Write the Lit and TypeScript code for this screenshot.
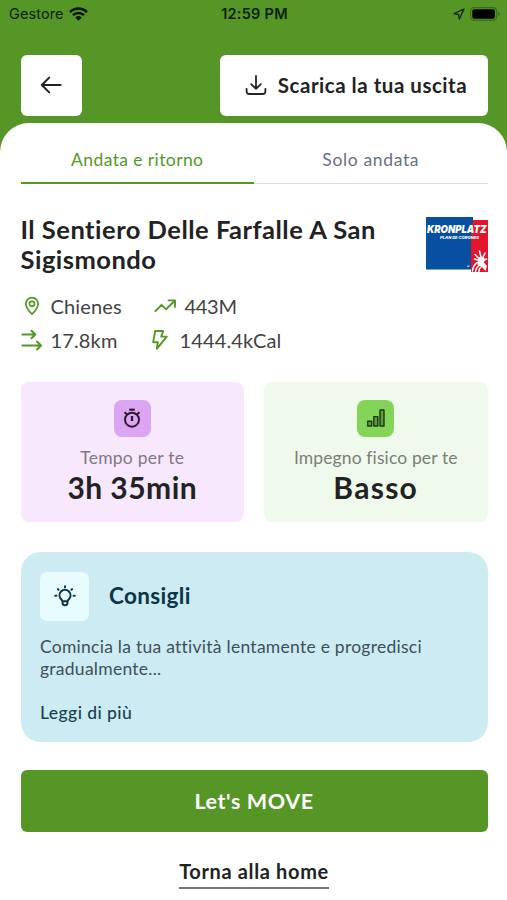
import { LitElement, html, css, svg } from "lit";
import { customElement } from "lit/decorators.js";

const arrowLeft = svg`<svg width="24" height="24" viewBox="0 0 24 24" fill="none" stroke="#222" stroke-width="2" stroke-linecap="round" stroke-linejoin="round"><path d="M21.600 12H3M10.200 4.600 2.800 12l7.400 7.400"/></svg>`;
const download = svg`<svg width="22" height="22" viewBox="0 0 22 22" fill="none" stroke="#222" stroke-width="1.800" stroke-linecap="round" stroke-linejoin="round"><path d="M11 2v12.500M6.200 10.200 11 14.800l4.800-4.600M1.600 14.800v2.400q0 2.800 2.800 2.800h13.200q2.800 0 2.800-2.800v-2.400"/></svg>`;
const wifi = svg`<svg width="19" height="14" viewBox="0 0 19 14" fill="none" stroke="#0a1404" stroke-width="2.500"><path d="M1 5.100C5.800.4 13.200.4 18 5.100M4 8.200C7 5.300 12 5.300 15 8.200"/><path d="M6.300 10.400Q9.500 7.700 12.700 10.400L9.500 13.700Z" fill="#0a1404" stroke="none"/></svg>`;
const locate = svg`<svg width="12" height="12" viewBox="0 0 12 12" fill="none" stroke="#14260a" stroke-width="1.300" stroke-linejoin="round"><path d="M11 1 1 5.600l4.500.9.900 4.500Z"/></svg>`;
const battery = svg`<svg width="30" height="14" viewBox="0 0 30 14"><rect x=".6" y=".6" width="26" height="12.800" rx="3.600" fill="none" stroke="#3b6b1b" stroke-width="1.100"/><rect x="2.300" y="2.300" width="22.600" height="9.400" rx="2" fill="#000"/><path d="M28 4.800q1.600.6 1.600 2.200T28 9.200Z" fill="#3b6b1b"/></svg>`;
const pin = svg`<svg width="22" height="20" viewBox="0 0 22 20" fill="none" stroke="#559826" stroke-width="1.700"><path d="M11 18.200C8 15.300 4.900 12 4.900 7.700a6.100 6.100 0 0 1 12.200 0C17.100 12 14 15.300 11 18.200Z"/><circle cx="11" cy="7.800" r="2.500"/></svg>`;
const trend = svg`<svg width="23" height="16" viewBox="0 0 23 16" fill="none" stroke="#559826" stroke-width="1.900" stroke-linecap="round" stroke-linejoin="round"><path d="m1.500 13 6-6.200 4.500 4.500 9-8.800M14.500 2.400H21v6.500"/></svg>`;
const distance = svg`<svg width="22" height="24" viewBox="0 0 22 24" fill="none" stroke="#559826" stroke-width="2.100" stroke-linecap="round" stroke-linejoin="round"><path d="M1.500 6.500H14M10.500 2.800 14.300 6.500 10.500 10.200M1.500 17.500H20M16 13.500l4 4-4 4"/></svg>`;
const bolt = svg`<svg width="18" height="22" viewBox="0 0 18 22" fill="none" stroke="#559826" stroke-width="1.900" stroke-linejoin="round"><path d="M4.200 2H12.200L10.200 7.600H15.800L5.800 19.800 6.900 13.200H2.200Z"/></svg>`;
const timer = svg`<svg width="20" height="22" viewBox="0 0 20 22" fill="none" stroke="#281930" stroke-width="1.900"><circle cx="10" cy="12.700" r="7"/><path d="M7.200 2.700h5.600" stroke-width="2.100"/><path d="M10 9v5" stroke-width="2.300"/><path d="m2.500 5.200 2.300 2M17.500 5.200l-2.300 2"/></svg>`;
const bars = svg`<svg width="20" height="20" viewBox="0 0 20 20" fill="#5d9c43" stroke="#1d3711" stroke-width="1.400" stroke-linejoin="round"><rect x="1.700" y="13.300" width="4" height="4.700"/><rect x="7.800" y="8.600" width="4" height="9.400"/><rect x="14" y="2" width="4" height="16"/></svg>`;
const bulb = svg`<svg width="22" height="22" viewBox="0 0 22 22" fill="none" stroke="#0b3547" stroke-width="2" stroke-linecap="round" stroke-linejoin="round"><path d="M8.400 16.300c-.2-1.400-.9-1.700-1.700-2.500a5.500 5.500 0 1 1 8.600 0c-.8.8-1.500 1.100-1.700 2.500ZM8.600 16.500v1.700q0 2 2.400 2t2.400-2v-1.700"/><path d="M11 1.200v1M1.200 10.700h1.200M19.600 10.700h1.200M3.900 4.100l.7.700M18.100 4.100l-.7.700"/></svg>`;

@customElement("resort-logo")
class ResortLogo extends LitElement {
  static styles = css`
    :host { display: block; }
    svg { display: block; overflow: visible; }
    .name { font: italic 900 11px "Inter", sans-serif; }
    .sub { font: italic 800 4px "Inter", sans-serif; }
  `;
  render() {
    return html`<svg width="62" height="56" viewBox="0 0 62 56" fill="#fff">
      <rect width="47" height="52.500" fill="#07509f" />
      <path d="M47 3H62V55H45V18Z" fill="#e3152d" />
      <text class="name" x="1" y="15.500" textLength="59.500" lengthAdjust="spacingAndGlyphs">KRONPLATZ</text>
      <text class="sub" x="14" y="22.300" textLength="39" lengthAdjust="spacingAndGlyphs">PLAN DE CORONES</text>
      <g fill="none" stroke="#fff" stroke-width="1.500" stroke-linecap="round">
        <path d="M46.500 54q.5-6 5-8.500M49.500 54.500q.5-4 3.500-6M53 54.500q0-3 2-4.500M49 37.500l4.500 4.500M53.500 34l1.500 6M59 36l-2.500 5M48.500 42l5 1.500M60.500 42l-3 1" />
      </g>
      <path d="M53 40l5 .5 1.500 3-2 1.500 3.500 4-1.500 5-3.500-4-4.500-2.500Z" />
      <rect x="41" y="48.500" width="2.500" height="1.500" fill="#9cc0e4" />
    </svg>`;
  }
}

@customElement("app-root")
class AppRoot extends LitElement {
  static styles = css`
    :host {
      display: flex;
      flex-direction: column;
      box-sizing: border-box;
      height: 900px;
      overflow: hidden;
      background: #559626;
      color: #222;
      font-family: "Lato", sans-serif;
      white-space: nowrap;
    }
    * { box-sizing: border-box; }
    svg { display: block; flex: none; }
    .status {
      display: grid;
      grid-template-columns: 1fr auto 1fr;
      align-items: center;
      height: 27px;
      padding: 0 7px 0 9px;
      font: 14.500px/18px "Inter", sans-serif;
      color: #0f1d06;
    }
    .carrier, .power { display: flex; align-items: center; gap: 5px; }
    .carrier { letter-spacing: 0.100px; }
    .power { justify-content: flex-end; }
    .clock { font-weight: 600; letter-spacing: 0.250px; }
    .actions {
      display: flex;
      justify-content: space-between;
      height: 96px;
      padding: 27.500px 19.500px 0 20.500px;
    }
    .action {
      display: flex;
      align-items: center;
      justify-content: center;
      height: 61.500px;
      border-radius: 6px;
      background: #fff;
    }
    .back { width: 61.500px; }
    .save { width: 268px; padding-left: 5px; gap: 11px; font-size: 20.500px; font-weight: 700; letter-spacing: 0.520px; }
    .sheet {
      flex: 1;
      padding: 10px 19.500px 0 20.500px;
      border-radius: 29px 29px 0 0;
      background: #fff;
    }
    .tabs { display: flex; height: 51px; border-bottom: 1px solid #dcdfe2; }
    .tab {
      flex: 1;
      height: 51px;
      padding-top: 16px;
      text-align: center;
      font-size: 17.500px;
      line-height: 22px;
      letter-spacing: 0.650px;
      color: #69707f;
    }
    .tab.on { color: #559826; border-bottom: 2.500px solid #559826; letter-spacing: 0.400px; }
    .intro { display: flex; justify-content: space-between; margin-top: 29.500px; }
    .title { margin: 0; font-size: 25.500px; line-height: 30.500px; font-weight: 700; letter-spacing: 0.490px; }
    .logo { margin-top: 3px; }
    .stats { display: grid; grid-template-columns: 131px 1fr; margin-top: 14.500px; }
    .stat { display: flex; align-items: center; height: 34px; font-size: 20px; color: #434343; letter-spacing: 0.150px; }
    .stat svg { margin-right: 8px; }
    .climb { letter-spacing: -0.300px; }
    .climb svg { margin: 0 8px 0 2px; }
    .energy svg { margin: 0 11px 0 -1px; }
    .cards { display: grid; grid-template-columns: 1fr 1fr; gap: 20px; margin-top: 25px; }
    .card {
      display: flex;
      flex-direction: column;
      align-items: center;
      height: 140px;
      padding-top: 18px;
      border-radius: 8px;
    }
    .time { background: #f7e8fe; }
    .effort { background: #effaec; }
    .badge { display: flex; align-items: center; justify-content: center; width: 37px; height: 36.500px; border-radius: 8px; }
    .time .badge { background: #dba5f4; }
    .effort .badge { background: #85d45a; }
    .label { margin-top: 10px; font-size: 17.500px; line-height: 22px; letter-spacing: 0.250px; color: #7f7883; }
    .effort .label { color: #788076; letter-spacing: 0.120px; }
    .value { font-size: 30px; line-height: 36px; font-weight: 700; letter-spacing: 0.450px; }
    .effort .value { letter-spacing: 1.300px; }
    .tips {
      height: 190px;
      margin-top: 30px;
      padding: 19.500px;
      border-radius: 20px;
      background: #ccebf2;
    }
    .tips-head { display: flex; align-items: center; gap: 20px; }
    .tip-icon { display: flex; align-items: center; justify-content: center; width: 49px; height: 49px; border-radius: 7px; background: #e8fbff; }
    .tips-title { font-size: 22.500px; line-height: 28px; font-weight: 700; letter-spacing: 0.350px; color: #0b3547; }
    .tips-text { margin: 15px 0 0; font-size: 17.500px; line-height: 22px; letter-spacing: 0.260px; color: #3f5058; }
    .more { margin-top: 22px; font-size: 17.500px; line-height: 22px; font-weight: 500; letter-spacing: 0.430px; color: #174150; }
    .go {
      height: 62px;
      margin-top: 27.500px;
      border-radius: 6px;
      background: #559626;
      color: #fff;
      text-align: center;
      font-size: 21.500px;
      line-height: 63px;
      font-weight: 700;
      letter-spacing: 0.580px;
    }
    .home { width: fit-content; margin: 27px auto 0; border-bottom: 2px solid #777; font-size: 20px; line-height: 25px; height: 30px; font-weight: 700; letter-spacing: 0.640px; }
  `;
  render() {
    return html`
      <div class="status">
        <div class="carrier"><span>Gestore</span>${wifi}</div>
        <div class="clock">12:59 PM</div>
        <div class="power">${locate}${battery}</div>
      </div>
      <div class="actions">
        <div class="action back">${arrowLeft}</div>
        <div class="action save">${download}<span>Scarica la tua uscita</span></div>
      </div>
      <div class="sheet">
        <div class="tabs">
          <div class="tab on">Andata e ritorno</div>
          <div class="tab">Solo andata</div>
        </div>
        <div class="intro">
          <h1 class="title">Il Sentiero Delle Farfalle A San<br />Sigismondo</h1>
          <resort-logo class="logo"></resort-logo>
        </div>
        <div class="stats">
          <div class="stat">${pin}<span>Chienes</span></div>
          <div class="stat climb">${trend}<span>443M</span></div>
          <div class="stat">${distance}<span>17.8km</span></div>
          <div class="stat energy">${bolt}<span>1444.4kCal</span></div>
        </div>
        <div class="cards">
          <div class="card time">
            <div class="badge">${timer}</div>
            <div class="label">Tempo per te</div>
            <div class="value">3h 35min</div>
          </div>
          <div class="card effort">
            <div class="badge">${bars}</div>
            <div class="label">Impegno fisico per te</div>
            <div class="value">Basso</div>
          </div>
        </div>
        <div class="tips">
          <div class="tips-head">
            <div class="tip-icon">${bulb}</div>
            <div class="tips-title">Consigli</div>
          </div>
          <p class="tips-text">Comincia la tua attività lentamente e progredisci<br />gradualmente...</p>
          <div class="more">Leggi di più</div>
        </div>
        <div class="go">Let's MOVE</div>
        <div class="home">Torna alla home</div>
      </div>
    `;
  }
}
